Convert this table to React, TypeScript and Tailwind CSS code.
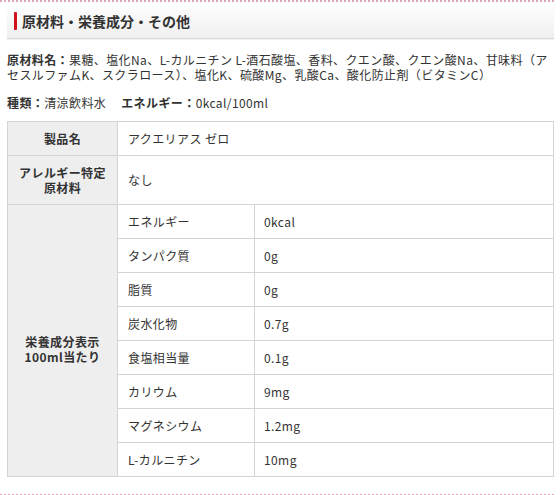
const nutrition = [
  ['エネルギー', '0kcal'],
  ['タンパク質', '0g'],
  ['脂質', '0g'],
  ['炭水化物', '0.7g'],
  ['食塩相当量', '0.1g'],
  ['カリウム', '9mg'],
  ['マグネシウム', '1.2mg'],
  ['L-カルニチン', '10mg'],
];

export default function App() {
  return (
    <div
      className="w-[560px] h-[495px] bg-white text-[#333] text-[12px] tracking-[0.4px] overflow-hidden"
      style={{ fontFamily: '"Noto Sans CJK JP", "Noto Sans", sans-serif' }}
    >
      <div className="w-[554px] border-t-2 border-dotted border-[#d9a7b1]" />
      <div className="w-[554px] pl-[7px]">
        <div className="mt-[1px] h-[36px] flex items-center bg-gradient-to-b from-white to-[#efefef] border-b border-[#d8d8d8] shadow-[0_1px_1px_rgba(0,0,0,0.05)]">
          <span className="ml-[7px] w-[3px] h-[18px] bg-[#d0101b] rounded-[1px]" />
          <h2 className="ml-[5px] text-[14px] tracking-normal font-bold text-[#333] leading-none">原材料・栄養成分・その他</h2>
        </div>

        <p className="mt-[13px] leading-[15px]">
          <span className="font-bold">原材料名：</span>果糖、塩化Na、L-カルニチン L-酒石酸塩、香料、クエン酸、クエン酸Na、甘味料（アセスルファムK、スクラロース）、塩化K、硫酸Mg、乳酸Ca、酸化防止剤（ビタミンC）
        </p>
        <p className="mt-[13px] leading-[15px]">
          <span className="font-bold">種類：</span>清涼飲料水<span className="font-bold ml-[15px]">エネルギー：</span>0kcal/100ml
        </p>

        <table className="mt-[11px] w-[547px] border-collapse table-fixed">
          <colgroup>
            <col className="w-[110px]" />
            <col className="w-[137px]" />
            <col />
          </colgroup>
          <tbody>
            <tr className="h-[34px]">
              <th className="bg-[#eeeeee] border border-[#d4d4d4] font-bold text-center leading-[15px]">製品名</th>
              <td colSpan={2} className="border border-[#d4d4d4] pl-[10px]">アクエリアス ゼロ</td>
            </tr>
            <tr className="h-[49px]">
              <th className="bg-[#eeeeee] border border-[#d4d4d4] font-bold text-center leading-[15px]">
                アレルギー特定
                <br />
                原材料
              </th>
              <td colSpan={2} className="border border-[#d4d4d4] pl-[10px]">なし</td>
            </tr>
            {nutrition.map(([name, value], i) => (
              <tr key={name} className="h-[34px]">
                {i === 0 && (
                  <th rowSpan={nutrition.length} className="bg-[#eeeeee] border border-[#d4d4d4] font-bold text-center leading-[15px] pt-[16px]">
                    栄養成分表示
                    <br />
                    100ml当たり
                  </th>
                )}
                <td className="border border-[#d4d4d4] pl-[10px]">{name}</td>
                <td className="border border-[#d4d4d4] pl-[9px]">{value}</td>
              </tr>
            ))}
          </tbody>
        </table>
      </div>
      <div className="mt-[17px] w-[554px] border-t-2 border-dotted border-[#d9a7b1]" />
    </div>
  );
}
